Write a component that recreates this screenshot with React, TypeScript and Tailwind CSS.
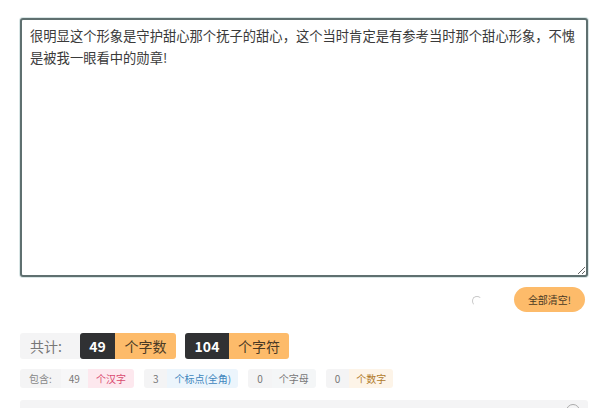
import React from "react"

const text =
  "很明显这个形象是守护甜心那个抚子的甜心，这个当时肯定是有参考当时那个甜心形象，不愧是被我一眼看中的勋章!"

const font = { fontFamily: '"Noto Sans CJK SC", "Noto Sans", sans-serif' }

function Tag({ num, label, tone }: { num: string; label: string; tone: string }) {
  return (
    <div className="flex h-[19px] items-stretch overflow-hidden rounded-[3px] text-[10px] leading-[19px]">
      <span className="bg-[#f4f4f5] px-[9px] text-[#777]">{num}</span>
      <span className={`px-[7px] ${tone}`}>{label}</span>
    </div>
  )
}

export default function App() {
  return (
    <div className="w-[600px] h-[408px] overflow-hidden bg-white" style={font}>
      <div className="px-5 pt-[18px]">
        {/* Input */}
        <textarea
          defaultValue={text}
          spellCheck={false}
          className="block w-[568px] h-[259px] rounded-[3px] border-2 border-[#5f7070] bg-white px-2 pt-[5px] text-[13.3px] leading-[22px] text-[#3a3a3a] shadow-[0_0_0_1px_#d9e6e6] outline-none"
          style={font}
        />

        {/* Actions */}
        <div className="mt-[10px] -mr-[5px] flex h-[25px] items-center justify-end">
          <span className="mr-[32px] mt-[2px] block h-[10px] w-[10px] rounded-full border-[1.5px] border-transparent border-t-[#c8c8c8] border-l-[#c8c8c8]" />
          <button className="h-[25px] w-[71px] rounded-full bg-[#fdbb6a] text-[10px] text-[#4a3a25]">
            全部清空!
          </button>
        </div>

        {/* Totals */}
        <div className="mt-[21px] flex items-center text-[14px]">
          <div className="flex h-[26px] w-[60px] items-center rounded-l-[3px] bg-[#f4f4f5] pl-[10px] text-[#777]">
            共计:
          </div>
          <div className="flex h-[26px] overflow-hidden rounded-[3px]">
            <span className="flex w-[35px] items-center justify-center bg-[#303133] font-semibold text-white">49</span>
            <span className="flex w-[61px] items-center justify-center bg-[#fdbb6a] text-[#4a3a25]">个字数</span>
          </div>
          <div className="ml-[9px] flex h-[26px] overflow-hidden rounded-[3px]">
            <span className="flex w-[44px] items-center justify-center bg-[#303133] font-semibold text-white">104</span>
            <span className="flex w-[60px] items-center justify-center bg-[#fdbb6a] text-[#4a3a25]">个字符</span>
          </div>
        </div>

        {/* Breakdown */}
        <div className="mt-[10px] flex items-center gap-[10px]">
          <div className="flex h-[19px] overflow-hidden rounded-[3px] text-[10px] leading-[19px]">
            <span className="bg-[#f4f4f5] px-[9px] text-[#888]">包含:</span>
            <span className="bg-[#f7f7f8] px-[8px] text-[#777]">49</span>
            <span className="bg-[#fde8ee] px-[8px] text-[#d9486f]">个汉字</span>
          </div>
          <Tag num="3" label="个标点(全角)" tone="bg-[#ecf5fc] text-[#3f86bd]" />
          <Tag num="0" label="个字母" tone="bg-[#f4f6f7] text-[#777]" />
          <Tag num="0" label="个数字" tone="bg-[#fdf4e8] text-[#b07a2a]" />
        </div>

        {/* Next panel */}
        <div className="relative mt-[12px] h-[30px] w-[568px] rounded-[3px] bg-[#f4f4f5]">
          <span className="absolute right-[8px] top-[4px] h-[14px] w-[14px] rounded-full border border-[#aaa]" />
        </div>
      </div>
    </div>
  )
}
